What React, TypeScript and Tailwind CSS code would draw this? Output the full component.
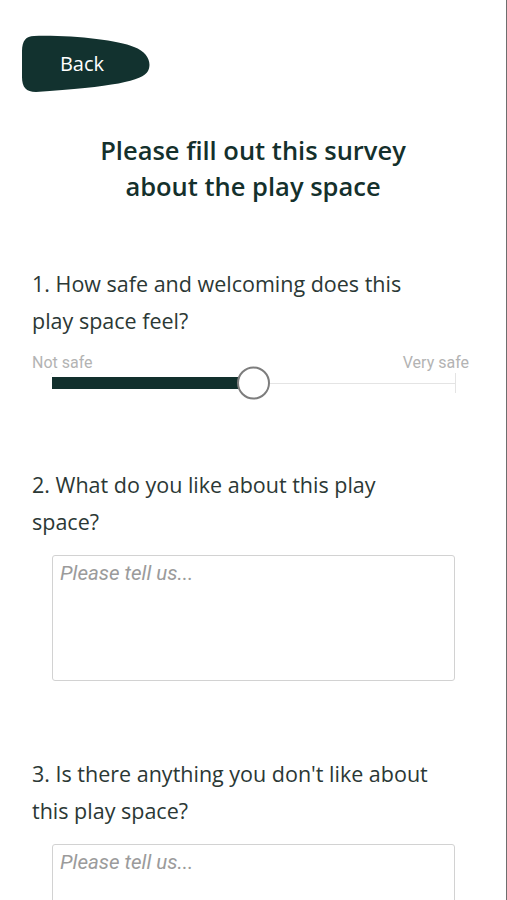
import { useState } from "react";

const questions = [
  { id: 2, text: "2. What do you like about this play space?" },
  { id: 3, text: "3. Is there anything you don't like about this play space?" },
];

function BackButton() {
  return (
    <button className="relative flex h-[58px] w-[128px] items-center justify-center">
      <svg className="absolute inset-0" width="128" height="58" viewBox="0 0 128 58" aria-hidden="true">
        <path
          d="M12 1 C50 0, 95 5, 112 12 C126 17, 130 28, 126 36 C121 46, 90 52, 14 57 C4 57, 0 52, 0 42 L0 16 C0 6, 4 1, 12 1 Z"
          fill="#12322f"
        />
      </svg>
      <span className="relative -ml-2 text-[20px] text-white">Back</span>
    </button>
  );
}

function SafetySlider() {
  const [value] = useState(50);
  const fill = (value / 100) * 405;

  return (
    <div className="mt-[14px]">
      <div className="flex justify-between pl-[32px] pr-[37px] text-[16px] leading-5 text-[#b3b3b3] [font-family:Roboto,sans-serif]">
        <span>Not safe</span>
        <span>Very safe</span>
      </div>
      <div className="relative ml-[51px] flex h-5 w-[405px] items-center">
        <div className="h-px w-px self-stretch bg-[#ececec]" />
        <div className="h-3 bg-[#12302d]" style={{ width: fill - 14 }} />
        <div className="h-px flex-1 bg-[#e4e4e4]" />
        <div className="h-5 w-px bg-[#e4e4e4]" />
        <div
          className="absolute top-1/2 h-[33px] w-[33px] -translate-y-1/2 rounded-full border-2 border-[#7d7d7d] bg-white"
          style={{ left: fill - 17 }}
        />
      </div>
    </div>
  );
}

export default function App() {
  return (
    <div className="min-h-screen w-[507px] border-r border-[#6e6e6e] bg-white pb-10 [font-family:'Open_Sans',sans-serif]">
      <div className="pl-[22px] pt-[35px]">
        <BackButton />
      </div>

      <h1 className="mt-[39px] text-center text-[25.5px] font-semibold leading-9 text-[#14302c]">
        Please fill out this survey
        <br />
        about the play space
      </h1>

      <p className="mt-[61px] w-[437px] pl-[32px] text-[21.5px] leading-[37px] text-[#2b3835]">
        1. How safe and welcoming does this play space feel?
      </p>

      <SafetySlider />

      {questions.map((q, i) => (
        <div key={q.id} className={i === 0 ? "mt-[73px]" : "mt-[74px]"}>
          <p className="w-[437px] pl-[32px] text-[21.5px] leading-[37px] text-[#2b3835]">{q.text}</p>
          <textarea
            placeholder="Please tell us..."
            className="ml-[52px] mt-[15px] block h-[126px] w-[403px] resize-none rounded-[3px] border border-[#d2d2d2] px-[7px] py-[2px] text-[20.5px] [font-family:Roboto,sans-serif] placeholder:italic placeholder:text-[#9b9b9b] focus:outline-none"
          />
        </div>
      ))}
    </div>
  );
}
